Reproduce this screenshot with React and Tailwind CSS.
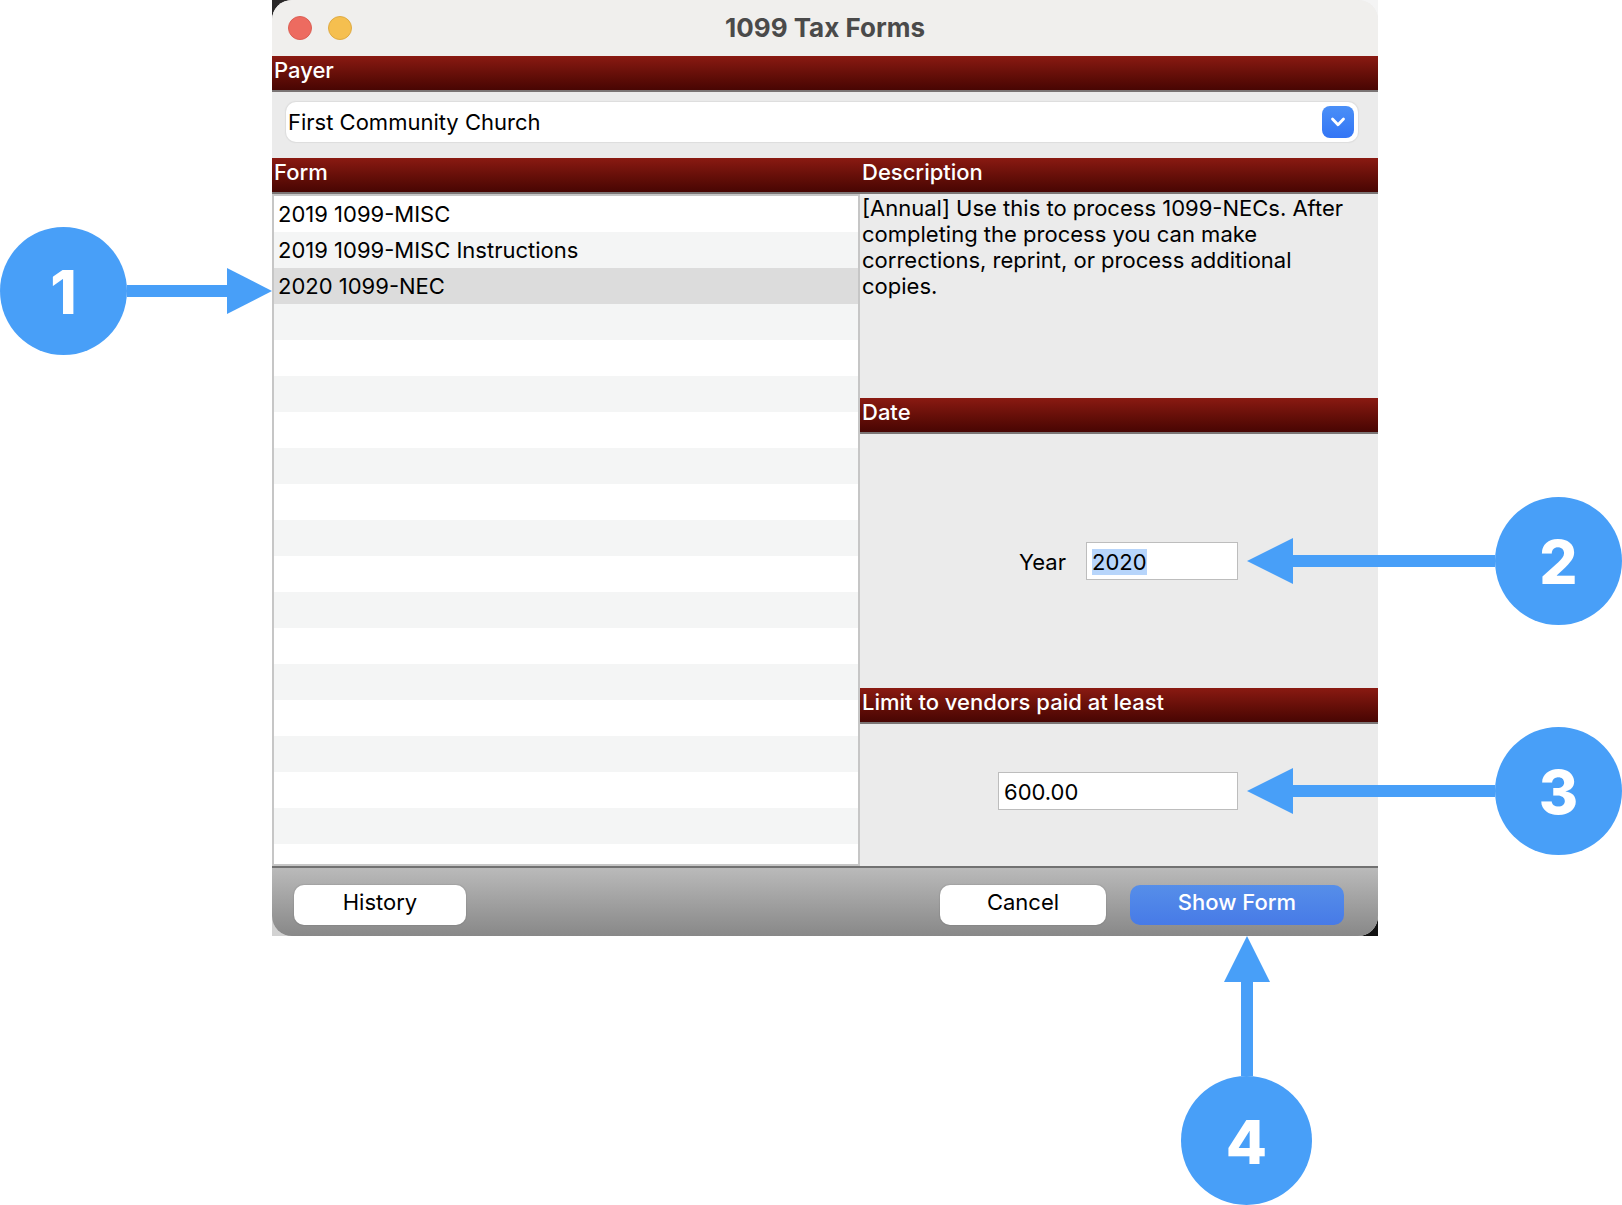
import { useState, useEffect, useRef } from 'react';

const forms = [
    {
        name: '2019 1099-MISC',
        description: '[Annual] Use this to process 1099-MISCs.',
    },
    {
        name: '2019 1099-MISC Instructions',
        description: '[Annual] Use this to print the 1099-MISC instructions.',
    },
    {
        name: '2020 1099-NEC',
        description: '[Annual] Use this to process 1099-NECs. After completing the process you can make corrections, reprint, or process additional copies.',
    },
];

const SectionBar = ({ children, htmlFor }) => {
    const className = 'block h-9 pl-0.5 leading-7 font-medium text-white border-b-2 border-[#7b7575] bg-linear-to-b from-[#8a1a12] to-[#480603]';
    if (htmlFor) return <label htmlFor={htmlFor} className={className}>{children}</label>;
    return <h2 className={className}>{children}</h2>;
};

const Badge = ({ number, className }) => (
    <span className={`flex shrink-0 items-center justify-center rounded-[50%] bg-[#489ff8] pt-0.5 text-[60px] font-extrabold text-white ${className}`}>
        {number}
    </span>
);

// Arrow drawn as a stretching shaft plus a fixed size head
const RightArrow = () => (
    <>
        <span className="h-3 flex-1 bg-[#489ff8]" />
        <svg width="45" height="46" viewBox="0 0 45 46" className="shrink-0" aria-hidden="true">
            <path d="M0 0L45 23L0 46Z" fill="#489ff8" />
        </svg>
    </>
);

const LeftArrow = () => (
    <>
        <svg width="46" height="46" viewBox="0 0 46 46" className="shrink-0" aria-hidden="true">
            <path d="M46 0L0 23L46 46Z" fill="#489ff8" />
        </svg>
        <span className="h-3 flex-1 bg-[#489ff8]" />
    </>
);

const App = () => {
    const [selected, setSelected] = useState(2);
    const [year, setYear] = useState('2020');
    const [limit, setLimit] = useState('600.00');
    const yearRef = useRef(null);

    useEffect(() => {
        yearRef.current.focus();
        yearRef.current.select();
    }, []);

    return (
        <main className="bg-white pl-[272px] pr-[244px] pb-[269px] font-['Inter',sans-serif] text-[22px] text-black">
            <div className="bg-[conic-gradient(#f4f4f4_25%,#111111_25%_50%,#d2d2d2_50%_75%,#2a2829_75%)]">
                <section className="rounded-[20px] bg-[#ebebeb]">
                    <header className="grid h-14 grid-cols-[1fr_auto_1fr] items-center rounded-t-[20px] bg-[#f0efed] px-4">
                        <div className="flex gap-4">
                            <button type="button" aria-label="Close" className="size-6 rounded-full border border-[#dc5f54] bg-[#ed6b60]" />
                            <button type="button" aria-label="Minimize" className="size-6 rounded-full border border-[#dfab43] bg-[#f5bf4f]" />
                        </div>
                        <h1 className="text-[26px] leading-8 font-bold text-[#4a4a4a]">1099 Tax Forms</h1>
                    </header>

                    <SectionBar htmlFor="payer">Payer</SectionBar>
                    <div className="pt-2.5 pr-5 pb-4 pl-3.5">
                        <div className="relative">
                            <select id="payer" className="block h-10 w-full appearance-none rounded-[10px] bg-white pr-10 pl-0.5 shadow-[0_0_1px_1px_#dddddd] outline-none">
                                <option>First Community Church</option>
                            </select>
                            <span className="pointer-events-none absolute top-1 right-1 flex size-8 items-center justify-center rounded-lg bg-linear-to-b from-[#4a8ff7] to-[#3375f5]">
                                <svg width="16" height="12" viewBox="0 0 16 12" fill="none" aria-hidden="true">
                                    <path d="M2.5 3L8 8.8L13.5 3" stroke="white" strokeWidth="2.8" strokeLinecap="round" strokeLinejoin="round" />
                                </svg>
                            </span>
                        </div>
                    </div>

                    <div className="grid grid-cols-[588fr_518fr]">
                        <div className="flex flex-col">
                            <SectionBar>Form</SectionBar>
                            <div className="relative flex-1 border-2 border-[#c6c6c6] bg-[repeating-linear-gradient(#ffffff_0_36px,#f4f5f5_36px_72px)]">
                                <ul>
                                    {forms.map((form, index) => (
                                        <li key={form.name}>
                                            <button
                                                type="button"
                                                onClick={() => setSelected(index)}
                                                className={`block h-9 w-full pl-1 text-left ${index === selected ? 'bg-[#dcdcdc]' : ''}`}
                                            >
                                                {form.name}
                                            </button>
                                        </li>
                                    ))}
                                </ul>
                                <div className="absolute top-[31px] right-full mr-0.5 flex w-[272px] items-center">
                                    <Badge number="1" className="h-32 w-[127px]" />
                                    <RightArrow />
                                </div>
                            </div>
                        </div>

                        <div>
                            <SectionBar>Description</SectionBar>
                            <p className="min-h-[204px] pt-px pr-5 pl-0.5 leading-[26px]">{forms[selected].description}</p>

                            <SectionBar>Date</SectionBar>
                            <div className="flex items-center justify-end gap-5 py-[108px] pr-[140px]">
                                <label htmlFor="year" className="pt-0.5">Year</label>
                                <div className="relative">
                                    <input
                                        id="year"
                                        ref={yearRef}
                                        value={year}
                                        onChange={(e) => setYear(e.target.value)}
                                        className="block h-[38px] w-[152px] border border-[#bdbdbd] bg-white px-[5px] pt-0.5 leading-[30px] outline-none selection:bg-[#b7d5fb] selection:text-black"
                                    />
                                    <div className="absolute top-1/2 left-full ml-[9px] flex w-[375px] -translate-y-1/2 items-center">
                                        <LeftArrow />
                                        <Badge number="2" className="h-32 w-[127px]" />
                                    </div>
                                </div>
                            </div>

                            <SectionBar htmlFor="limit">Limit to vendors paid at least</SectionBar>
                            <div className="flex justify-end pt-12 pr-[140px] pb-14">
                                <div className="relative">
                                    <input
                                        id="limit"
                                        value={limit}
                                        onChange={(e) => setLimit(e.target.value)}
                                        className="block h-[38px] w-[240px] border border-[#bdbdbd] bg-white px-[5px] pt-0.5 leading-[30px] outline-none"
                                    />
                                    <div className="absolute top-1/2 left-full ml-[9px] flex w-[375px] -translate-y-1/2 items-center">
                                        <LeftArrow />
                                        <Badge number="3" className="h-32 w-[127px]" />
                                    </div>
                                </div>
                            </div>
                        </div>
                    </div>

                    <footer className="flex rounded-b-[20px] border-t-2 border-[#717171] bg-linear-to-b from-[#bababa] to-[#888888] pt-[17px] pr-[34px] pb-[11px] pl-[22px]">
                        <button type="button" className="h-10 w-[172px] rounded-[10px] bg-white pb-1.5 shadow-[0_0_1px_1px_#00000010]">History</button>
                        <button type="button" className="ml-auto h-10 w-[166px] rounded-[10px] bg-white pb-1.5 shadow-[0_0_1px_1px_#00000010]">Cancel</button>
                        <div className="relative ml-6">
                            <button type="button" className="h-10 w-[214px] rounded-[10px] bg-linear-to-b from-[#568ee9] to-[#477ae7] pb-1.5 font-medium text-white">Show Form</button>
                            <div className="absolute top-full left-[51px] mt-[11px] flex h-[269px] flex-col items-center">
                                <svg width="46" height="46" viewBox="0 0 46 46" className="shrink-0" aria-hidden="true">
                                    <path d="M0 46L23 0L46 46Z" fill="#489ff8" />
                                </svg>
                                <span className="w-3 flex-1 bg-[#489ff8]" />
                                <Badge number="4" className="h-[129px] w-[131px]" />
                            </div>
                        </div>
                    </footer>
                </section>
            </div>
        </main>
    );
};

export default App;
